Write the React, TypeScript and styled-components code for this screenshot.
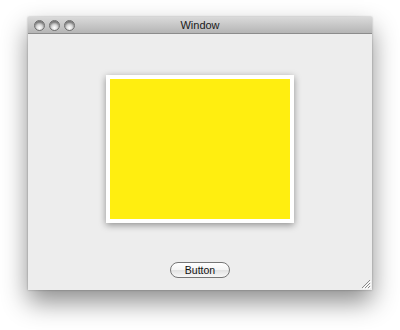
import React from 'react';
import styled, { createGlobalStyle } from 'styled-components';

const GlobalStyle = createGlobalStyle`
  html, body {
    margin: 0;
    padding: 0;
    background: #ffffff;
  }
  body {
    width: 400px;
    height: 330px;
    overflow: hidden;
    font-family: "DejaVu Sans", "Liberation Sans", sans-serif;
  }
`;

const Page = styled.div`
  padding: 17px 0 0 28px;
`;

const Window = styled.div`
  width: 344px;
  height: 273px;
  display: flex;
  flex-direction: column;
  background: #ededed;
  box-shadow: 0 12px 24px rgba(0, 0, 0, 0.45), 0 0 2px rgba(0, 0, 0, 0.3);
  position: relative;
`;

const TitleBar = styled.div`
  height: 16px;
  display: flex;
  align-items: center;
  position: relative;
  background: linear-gradient(#dadada, #b5b5b5);
  border-bottom: 1px solid #8c8c8c;
  padding-left: 6px;
  gap: 4px;
`;

const Light = styled.div`
  width: 11px;
  height: 11px;
  box-sizing: border-box;
  border-radius: 50%;
  border: 1px solid #6f6f6f;
  background: radial-gradient(circle at 50% 75%, #ffffff 0%, #dcdcdc 35%, #9a9a9a 100%);
  box-shadow: inset 0 2px 2px rgba(0, 0, 0, 0.35);
`;

const Title = styled.div`
  position: absolute;
  left: 0;
  right: 0;
  top: 0;
  bottom: 0;
  display: flex;
  align-items: center;
  justify-content: center;
  font-family: "Liberation Sans", sans-serif;
  font-size: 11px;
  color: #1a1a1a;
  pointer-events: none;
`;

const Content = styled.div`
  flex: 1;
  display: flex;
  flex-direction: column;
  align-items: center;
  padding-top: 41px;
`;

const Frame = styled.div`
  width: 180px;
  height: 140px;
  border: 4px solid #ffffff;
  background: #ffee10;
  box-shadow: 0 2px 7px rgba(0, 0, 0, 0.4);
`;

const PushButton = styled.button`
  margin-top: 39px;
  width: 60px;
  height: 16px;
  border-radius: 8px;
  border: 1px solid #767676;
  background: linear-gradient(#ffffff, #f4f4f4 50%, #e2e2e2 51%, #f7f7f7);
  font-family: "Liberation Sans", sans-serif;
  font-size: 10.5px;
  color: #111;
  padding: 0;
  line-height: 14px;
`;

const Grip = styled.svg`
  position: absolute;
  right: 1px;
  bottom: 1px;
`;

export default function App() {
  return (
    <>
      <GlobalStyle />
      <Page>
        <Window>
          <TitleBar>
            <Light />
            <Light />
            <Light />
            <Title>Window</Title>
          </TitleBar>
          <Content>
            <Frame />
            <PushButton>Button</PushButton>
          </Content>
          <Grip width="10" height="10" viewBox="0 0 10 10">
            <path d="M9 1 L1 9 M9 4 L4 9 M9 7 L7 9" stroke="#8a8a8a" strokeWidth="1" />
            <path d="M10 2 L2 10 M10 5 L5 10 M10 8 L8 10" stroke="#ffffff" strokeWidth="1" />
          </Grip>
        </Window>
      </Page>
    </>
  );
}
